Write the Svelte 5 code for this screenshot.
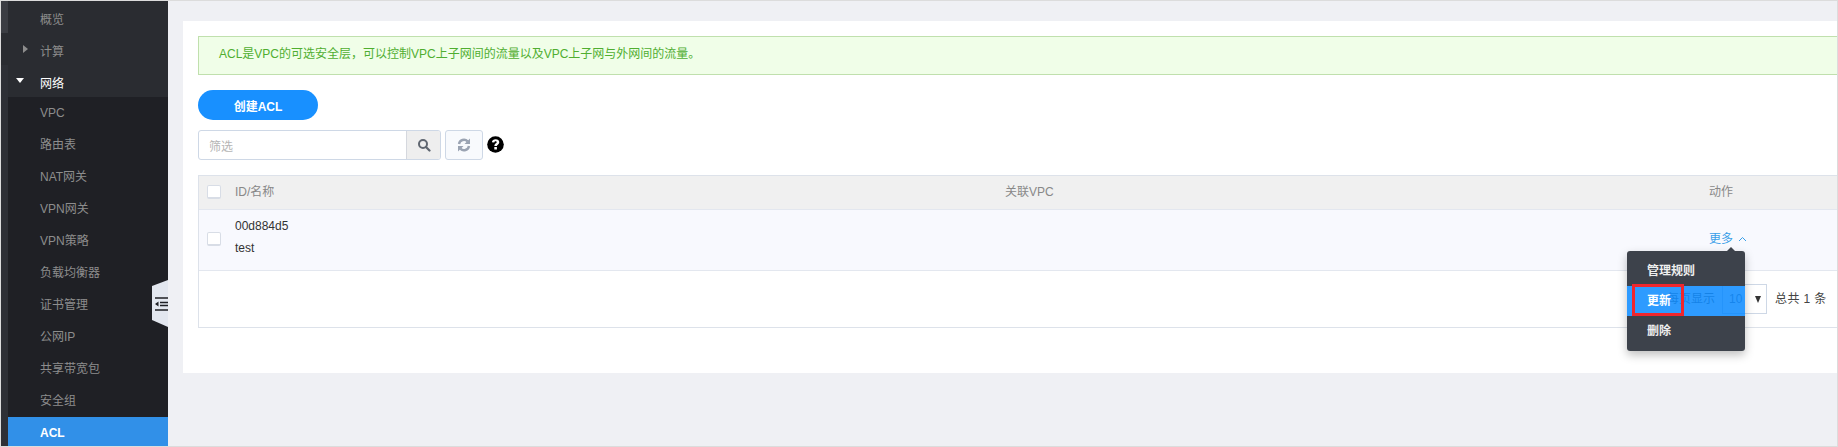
<script>
  const items = [
    { t: '概览', k: 'top first' },
    { t: '计算', k: 'top hover', arrow: 'right' },
    { t: '网络', k: 'top open', arrow: 'down' },
    { t: 'VPC' }, { t: '路由表' }, { t: 'NAT网关' }, { t: 'VPN网关' }, { t: 'VPN策略' },
    { t: '负载均衡器' }, { t: '证书管理' }, { t: '公网IP' }, { t: '共享带宽包' }, { t: '安全组' },
    { t: 'ACL', k: 'active' }
  ];
</script>

<div class="frame">
  <aside class="side">
    {#each items as it}
      <div class="item {it.k ?? ''}">
        {#if it.arrow === 'right'}<span class="arr-r"></span>{/if}
        {#if it.arrow === 'down'}<span class="arr-d"></span>{/if}
        <span>{it.t}</span>
      </div>
    {/each}
    <div class="collapse">
      <svg width="13" height="14" viewBox="0 0 13 14"><path d="M0 1h13M5 5.500h8M5 8.500h8M0 13h13" stroke="#1f2025" stroke-width="1.500" fill="none"/><path d="M0 7 3.500 4.500v5z" fill="#1f2025"/></svg>
    </div>
  </aside>
  <main class="main">
    <section class="card">
      <div class="alert">ACL是VPC的可选安全层，可以控制VPC上子网间的流量以及VPC上子网与外网间的流量。</div>
      <button class="create">创建ACL</button>
      <div class="tools">
        <div class="search">
          <span class="ph">筛选</span>
          <span class="sbtn">
            <svg width="14" height="14" viewBox="0 0 14 14"><circle cx="6" cy="6" r="4" fill="none" stroke="#5f6670" stroke-width="2"/><path d="M9 9l3.500 3.500" stroke="#5f6670" stroke-width="2.200" stroke-linecap="round"/></svg>
          </span>
        </div>
        <span class="refresh">
          <svg width="14" height="14" viewBox="0 0 14 14"><path d="M2 6a5 5 0 0 1 8.600-2.600M12 8a5 5 0 0 1-8.600 2.600" fill="none" stroke="#9aa3b2" stroke-width="2.400"/><path d="M13 .5v5.500H7.500zM1 13.500V8h5.500z" fill="#9aa3b2"/></svg>
        </span>
        <span class="help">
          <svg width="17" height="17" viewBox="0 0 17 17"><circle cx="8.500" cy="8.500" r="8.300" fill="#000"/><path d="M4.900 6.300C5 4.300 6.600 3.200 8.600 3.200c2.100 0 3.700 1.200 3.700 3 0 2.300-2.400 2.400-2.400 3.900H7.400c0-2.700 2.300-2.800 2.300-3.800 0-.6-.5-1-1.100-1-.8 0-1.200.5-1.300 1.200z" fill="#fff"/><rect x="7.300" y="11" width="2.600" height="2.500" fill="#fff"/></svg>
        </span>
      </div>
      <div class="table">
        <div class="row head">
          <span class="cb"></span>
          <span class="c-name">ID/名称</span>
          <span class="c-vpc">关联VPC</span>
          <span class="c-act">动作</span>
        </div>
        <div class="row body">
          <span class="cb"></span>
          <div class="c-name"><div>00d884d5</div><div class="nm">test</div></div>
          <span class="c-act more">更多 <svg width="9" height="6" viewBox="0 0 9 6"><path d="M1 5l3.500-3.500L8 5" fill="none" stroke="#3a9fe8" stroke-width="1"/></svg></span>
        </div>
        <div class="foot">
          <span class="ps">每页显示</span>
          <span class="sel"><span>10</span><i></i></span>
          <span class="tot">总共 1 条</span>
        </div>
        <div class="menu">
          <div class="mi first">管理规则</div>
          <div class="mi on">更新<span class="redbox"></span></div>
          <div class="mi last">删除</div>
        </div>
      </div>
    </section>
  </main>
</div>

<style>
  :global(body) { margin: 0; }
  .frame {
    width: 1838px; height: 447px; box-sizing: border-box;
    border: 1px solid #dcdcdc;
    display: flex; overflow: hidden;
    font-family: "Liberation Sans", "Noto Sans CJK SC", sans-serif;
    background: #eff0f4;
  }
  .side {
    width: 167px; flex: none; position: relative;
    background: #1f2025;
    box-sizing: border-box;
  }
  .item {
    height: 32px; line-height: 32px; padding-left: 32px;
    border-left: 7px solid #2e3036;
    font-size: 12px; color: #8d8d8d; position: relative;
  }
  .item.top { background: #2a2c31; line-height: 38px; }
  .item.first { border-left-color: #3b3d43; }
  .item.hover { border-left-color: #2a2c31; }
  .item.open { color: #fff; }
  .item.active { background: #3190e8; color: #fff; font-weight: 700; height: 29px; }
  .arr-r {
    position: absolute; left: 15px; top: 12px;
    border-left: 5px solid #8d8d8d; border-top: 4px solid transparent; border-bottom: 4px solid transparent;
  }
  .arr-d {
    position: absolute; left: 8px; top: 13px;
    border-top: 5px solid #fff; border-left: 4px solid transparent; border-right: 4px solid transparent;
  }
  .collapse {
    position: absolute; right: 0; top: 279px; width: 16px; height: 47px;
    background: #e3e7ef;
    clip-path: polygon(100% 0, 0 13%, 0 85%, 100% 100%);
    display: flex; align-items: center; justify-content: flex-end; overflow: hidden;
  }
  .main { flex: 1; min-width: 0; padding: 20px 0 0 15px; }
  .card {
    height: 352px; box-sizing: border-box; background: #fff;
    padding: 15px 0 0 15px;
  }
  .alert {
    height: 39px; line-height: 35px; box-sizing: border-box;
    border: 1px solid #c0e0ad; border-right: 0; background: #f0fee8; color: #4fae30;
    font-size: 12px; padding-left: 20px;
  }
  .create {
    display: block; margin-top: 15px; width: 120px; height: 30px;
    border: 0; border-radius: 15px; background: #1890ff; color: #fff;
    font: 700 12px "Liberation Sans", "Noto Sans CJK SC", sans-serif; padding: 0;
  }
  .tools { display: flex; align-items: center; margin-top: 10px; height: 30px; }
  .search {
    width: 243px; height: 30px; box-sizing: border-box; display: flex; align-items: center;
    border: 1px solid #ced8e6; border-radius: 3px; background: #fff; overflow: hidden;
  }
  .ph { flex: 1; padding-left: 10px; font-size: 12px; color: #b5b5b5; }
  .sbtn {
    width: 33px; height: 28px; background: #eee; border-left: 1px solid #d5d8de;
    display: flex; align-items: center; justify-content: center;
  }
  .refresh {
    width: 38px; height: 30px; margin-left: 4px; box-sizing: border-box;
    border: 1px solid #ced8e6; border-radius: 3px; background: #f8fafd;
    display: flex; align-items: center; justify-content: center;
  }
  .help { margin-left: 4px; display: flex; margin-top: -1px; }
  .table {
    position: relative; margin-top: 15px; height: 153px; box-sizing: border-box;
    border: 1px solid #dde2ea; border-right: 0;
  }
  .row { display: flex; align-items: center; font-size: 12px; position: relative; box-sizing: border-box; }
  .head { height: 34px; background: #f0f0f0; color: #888; border-bottom: 1px solid #e3e7ef; padding-bottom: 2px; }
  .head .c-name, .head .c-vpc, .head .c-act { top: 8px; line-height: 16px; }
  .body { height: 61px; background: #f8f9fe; color: #333; border-bottom: 1px solid #e3e7ef; padding-bottom: 3px; }
  .cb {
    width: 12px; height: 11px; margin-left: 8px; box-sizing: content-box;
    border: 1px solid #d8dde6; border-bottom: 2px solid #d8dde6; border-radius: 2px; background: #fff; flex: none;
  }
  .c-name { position: absolute; left: 36px; }
  .body .c-name { top: 8px; line-height: 16px; }
  .c-name .nm { margin-top: 6px; }
  .c-vpc { position: absolute; left: 806px; }
  .c-act { position: absolute; left: 1510px; }
  .more { color: #3a9fe8; top: 21px; line-height: 16px; }
  .more svg { vertical-align: 1px; margin-left: 2px; }
  .foot { height: 56px; font-size: 12px; color: #444; position: relative; }
  .ps { position: absolute; left: 1468px; top: 20px; line-height: 16px; color: #777; }
  .sel {
    position: absolute; left: 1523px; top: 13px; width: 45px; height: 30px; box-sizing: border-box;
    border: 1px solid #ced8e6; padding-left: 6px; line-height: 28px; color: #7c8696;
  }
  .sel i {
    position: absolute; right: 5px; top: 11px;
    border-top: 7px solid #333; border-left: 3.500px solid transparent; border-right: 3.500px solid transparent;
  }
  .tot { position: absolute; left: 1576px; top: 20px; line-height: 16px; letter-spacing: .4px; white-space: nowrap; }
  .menu {
    position: absolute; left: 1428px; top: 75px; width: 118px; height: 100px;
    border-radius: 3px;
    box-shadow: 0 4px 10px rgba(0,0,0,.25); z-index: 5;
  }
  .menu::before {
    content: ""; position: absolute; top: -4px; left: 100px;
    border-bottom: 4px solid #3d424b; border-left: 4px solid transparent; border-right: 4px solid transparent;
  }
  .mi { height: 30px; line-height: 30px; padding-left: 20px; color: #eee; font-size: 12px; font-weight: 700; position: relative; background: #3d424b; }
  .mi.first { height: 35px; padding-top: 4px; box-sizing: border-box; line-height: 33px; border-radius: 3px 3px 0 0; }
  .mi.last { height: 35px; box-sizing: border-box; line-height: 31px; border-radius: 0 0 3px 3px; }
  .mi.on { background: rgba(0,133,255,.82); color: #fff; }
  .redbox {
    position: absolute; left: 5px; top: -2px; width: 52px; height: 32px; box-sizing: border-box;
    border: 3px solid #f0262d;
  }
</style>
